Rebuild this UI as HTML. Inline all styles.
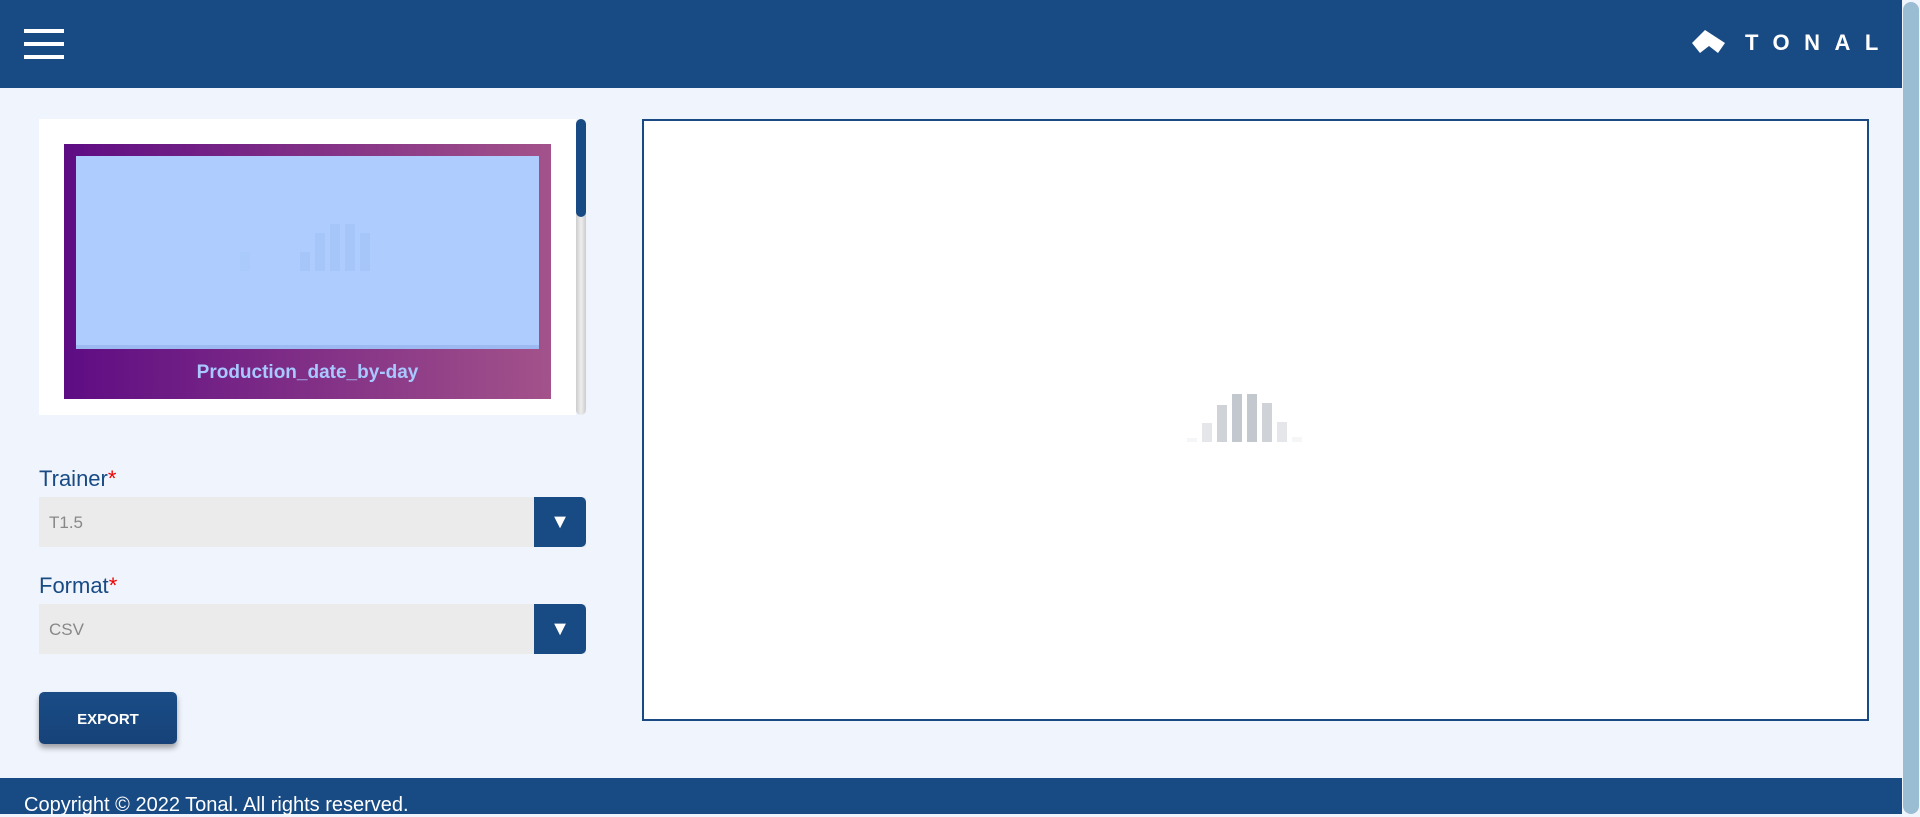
<!DOCTYPE html>
<html><head><meta charset="utf-8"><style>
*{margin:0;padding:0;box-sizing:border-box}
body{width:1920px;height:814px;overflow:hidden;background:#f0f4fc;font-family:"Liberation Sans",sans-serif;position:relative}
.abs{position:absolute}
.hdr{left:0;top:0;width:1902px;height:88px;background:#184a84}
.sb{left:1902px;top:0;width:18px;height:814px;background:#f0f4fc}
.sbt{left:1903px;top:2px;width:16px;height:812px;background:#9bbdd4;border-radius:8px}
.ham span{position:absolute;left:24px;width:40px;height:4px;background:#fff}
.logo{left:1745px;top:30px;color:#fff;font-size:22px;letter-spacing:14.5px;font-weight:bold}
.card{left:39px;top:119px;width:537px;height:296px;background:#fff}
.grad{left:64px;top:144px;width:487px;height:255px;background:linear-gradient(90deg,#5e0c83,#a3528a)}
.inner{left:76px;top:156px;width:463px;height:193px;background:#aecdfe;border-bottom:4px solid #9db9f2}
.lbl{left:64px;width:487px;top:362px;text-align:center;color:#a8c8ff;font-weight:bold;font-size:19px}
.track{left:576px;top:119px;width:10px;height:296px;background:linear-gradient(90deg,#ccc,#eee,#ccc);border-radius:5px}
.thumb{left:576px;top:119px;width:10px;height:98px;background:#184a84;border-radius:5px}
.flab{left:39px;color:#184a84;font-size:22px}
.flab b{color:#e00;font-weight:normal}
.sel{left:39px;width:547px;height:50px;background:#ebebeb;color:#888;font-size:17px;padding:16px 10px}
.btn{position:absolute;right:0;top:0;width:52px;height:50px;background:#184a84;border-radius:0 5px 5px 0;color:#fff;font-size:20px;text-align:center;line-height:50px}
.exp{left:39px;top:692px;width:138px;height:52px;background:linear-gradient(#1a4c86,#164278);border-radius:5px;box-shadow:0 4px 6px rgba(0,0,0,.35);color:#fff;font-weight:bold;font-size:15px;text-align:center;line-height:56px}
.panel{left:642px;top:119px;width:1227px;height:602px;background:#fff;border:2px solid #1a4a84}
.ftr{left:0;top:778px;width:1902px;height:36px;background:#184a84;color:#fff;font-size:20px;padding:16px 24px 0}
.bar{position:absolute;width:10px;bottom:372px}
.mb{position:absolute;width:10px;background:#a6c5f8}
</style></head><body>
<div class="abs hdr"></div>
<div class="ham"><span style="top:29px"></span><span style="top:42px"></span><span style="top:55px"></span></div>
<svg class="abs" style="left:0;top:0" width="1800" height="88"><path d="M1692 43 L1705 30 L1725 43 L1718 53 L1709 46 L1700 53 Z" fill="#fff"/></svg>
<div class="abs logo">TONAL</div>
<div class="abs sb"></div><div class="abs sbt"></div>
<div class="abs card"></div>
<div class="abs grad"></div>
<div class="abs inner"></div>
<div class="mb" style="left:240px;top:252px;height:19px;background:#abcafc"></div>
<div class="mb" style="left:300px;top:252px;height:19px"></div>
<div class="mb" style="left:315px;top:233px;height:38px"></div>
<div class="mb" style="left:330px;top:224px;height:47px"></div>
<div class="mb" style="left:345px;top:224px;height:47px"></div>
<div class="mb" style="left:360px;top:233px;height:38px"></div>
<div class="abs lbl">Production_date_by-day</div>
<div class="abs track"></div><div class="abs thumb"></div>
<div class="abs flab" style="top:466px">Trainer<b>*</b></div>
<div class="abs sel" style="top:497px">T1.5<div class="btn">▼</div></div>
<div class="abs flab" style="top:573px">Format<b>*</b></div>
<div class="abs sel" style="top:604px">CSV<div class="btn">▼</div></div>
<div class="abs exp">EXPORT</div>
<div class="abs panel"></div>
<div class="bar" style="left:1187px;height:4px;background:#f5f6f8"></div>
<div class="bar" style="left:1202px;height:19px;background:#e4e6ea"></div>
<div class="bar" style="left:1217px;height:37px;background:#cfd2d7"></div>
<div class="bar" style="left:1232px;height:48px;background:#c3c7ce"></div>
<div class="bar" style="left:1247px;height:48px;background:#c3c7ce"></div>
<div class="bar" style="left:1262px;height:39px;background:#cfd2d7"></div>
<div class="bar" style="left:1277px;height:20px;background:#e4e6ea"></div>
<div class="bar" style="left:1292px;height:5px;background:#f5f6f8"></div>
<div class="abs ftr">Copyright © 2022 Tonal. All rights reserved.</div>
</body></html>
